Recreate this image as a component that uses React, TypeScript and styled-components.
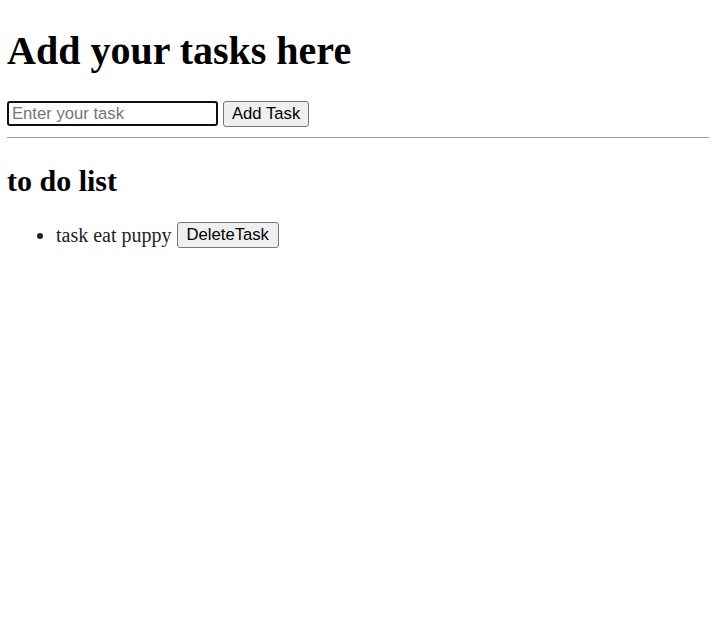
import React from "react";
import styled, { createGlobalStyle } from "styled-components";

const Global = createGlobalStyle`
  html, body { background: #fff; }
  body {
    margin: 0;
    padding: 0 6px 0 7px;
    font-family: "Liberation Serif", "Times New Roman", serif;
    font-size: 20px;
    color: #000;
  }
  #root { display: flow-root; }
`;

const Title = styled.h1`
  font-size: 40px;
  font-weight: bold;
  margin: 26.8px 0 0;
  line-height: normal;
`;

const Form = styled.div`
  display: flex;
  align-items: center;
  gap: 5px;
  margin-top: 27px;
  height: 26px;
`;

const TaskInput = styled.input`
  width: 211px;
  height: 25px;
  box-sizing: border-box;
  padding: 0 3px;
  font-family: "Liberation Sans", Arial, sans-serif;
  font-size: 16.67px;
  color: #000;
  border: 2px solid #101010;
  border-radius: 3px;
  outline: none;
  &::placeholder { color: #767676; }
`;

const Button = styled.button`
  font-family: "Liberation Sans", Arial, sans-serif;
  font-size: 16.67px;
  padding: 0 8px;
  height: 26px;
  box-sizing: border-box;
  background: #efefef;
  color: #000;
  border: 1px solid #767676;
  border-radius: 3px;
`;

const DeleteButton = styled(Button)`
  padding: 0 9px;
`;

const Rule = styled.hr`
  margin: 10px 0 0;
  border: none;
  border-top: 1px solid #9a9a9a;
  height: 0;
`;

const Heading = styled.h2`
  font-size: 30px;
  font-weight: bold;
  margin: 26px 0 0;
  line-height: normal;
`;

const List = styled.ul`
  margin: 24.5px 0 0;
  padding-left: 49px;
`;

const Item = styled.li`
  font-size: 20px;
  color: #222;
`;

const Row = styled.span`
  display: inline-flex;
  align-items: center;
  gap: 5px;
`;

export default function App() {
  return (
    <>
      <Global />
      <Title>Add your tasks here</Title>
      <Form>
        <TaskInput placeholder="Enter your task" />
        <Button>Add Task</Button>
      </Form>
      <Rule />
      <Heading>to do list</Heading>
      <List>
        <Item>
          <Row>
            task eat puppy
            <DeleteButton>DeleteTask</DeleteButton>
          </Row>
        </Item>
      </List>
    </>
  );
}
